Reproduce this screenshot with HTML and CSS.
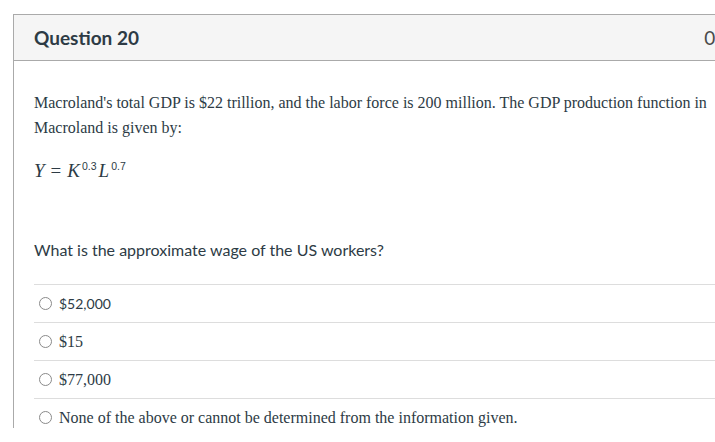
FILE: index.html
```html
<!DOCTYPE html>
<html lang="en">
<head>
<meta charset="utf-8">
<title>Question 20</title>
<link rel="stylesheet" href="styles.css">
</head>
<body>
<div class="question">
  <div class="q-header">
    <span class="q-title">Question 20</span>
    <span class="q-points">0 / 1 pts</span>
  </div>
  <div class="q-body">
    <p class="q-text">Macroland's total GDP is $22 trillion, and the labor force is 200 million. The GDP production function in Macroland is given by:</p>
    <p class="q-formula"><span class="mi">Y</span><span class="mo">=</span><span class="mi">K</span><sup class="sup">0.3</sup><span class="mi">L</span><sup class="sup">0.7</sup></p>
    <p class="q-prompt">What is the approximate wage of the US workers?</p>
    <div class="answers">
      <label class="answer"><span class="radio"></span><span class="ans-sans">$52,000</span></label>
      <label class="answer"><span class="radio"></span><span class="ans-serif">$15</span></label>
      <label class="answer"><span class="radio"></span><span class="ans-serif">$77,000</span></label>
      <label class="answer"><span class="radio"></span><span class="ans-serif">None of the above or cannot be determined from the information given.</span></label>
    </div>
  </div>
</div>
</body>
</html>
```

FILE: styles.css
```css
html, body {
  margin: 0;
  padding: 0;
  overflow: hidden;
  background: #ffffff;
}

body {
  font-family: Lato, "Open Sans", sans-serif;
  color: #2d3b45;
}

.question {
  margin: 14px 0 0 13px;
  width: 783px;
  height: 414px;
  box-sizing: border-box;
  border: 1px solid #aaaaaa;
  border-bottom: none;
  overflow: hidden;
}

.q-header {
  height: 45px;
  display: flex;
  align-items: center;
  justify-content: space-between;
  padding: 0 20px;
  background: #f5f5f5;
  border-bottom: 1px solid #aaaaaa;
}

.q-title {
  font-family: Lato, sans-serif;
  font-weight: 700;
  font-size: 19px;
  color: #2d3b45;
}

.q-points {
  font-family: Lato, sans-serif;
  font-size: 19px;
  color: #4a4a4a;
}

.q-body {
  padding: 29px 20px 0 20px;
}

.q-text {
  margin: 0;
  width: 680px;
  font-family: "Liberation Serif", "Times New Roman", serif;
  font-size: 16px;
  line-height: 25px;
  color: #2d3b45;
}

.q-formula {
  margin: 19px 0 0 0;
  font-family: "Liberation Serif", "Times New Roman", serif;
  font-size: 19px;
  line-height: 24px;
  color: #2d3b45;
}

.mi {
  font-style: italic;
}

.mo {
  margin: 0 6px 0 6px;
}

.sup {
  font-family: "Liberation Sans", Arial, sans-serif;
  font-size: 10.5px;
  vertical-align: 7px;
  line-height: 0;
  margin-left: 2px;
  margin-right: 2px;
}

.q-prompt {
  margin: 55px 0 0 0;
  font-family: Lato, sans-serif;
  font-size: 16px;
  line-height: 24px;
  color: #2d3b45;
}

.answers {
  margin-top: 22px;
}

.answer {
  display: flex;
  align-items: center;
  gap: 7px;
  height: 37px;
  border-top: 1px solid #dddddd;
  padding-left: 5px;
}

.radio {
  width: 13px;
  height: 13px;
  box-sizing: border-box;
  border: 1px solid #8a8a8a;
  border-radius: 50%;
  flex: none;
}

.ans-sans {
  font-family: Lato, sans-serif;
  font-size: 14px;
  color: #2d3b45;
}

.ans-serif {
  font-family: "Liberation Serif", "Times New Roman", serif;
  font-size: 16px;
  color: #2d3b45;
}
```
